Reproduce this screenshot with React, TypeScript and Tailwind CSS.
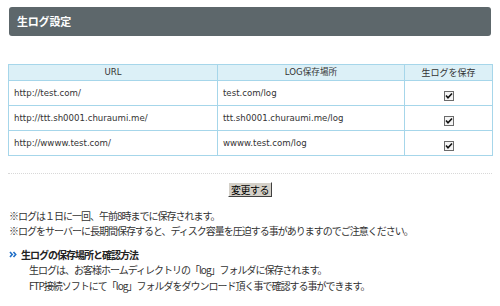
const rows = [
  { url: "http://test.com/", log: "test.com/log" },
  { url: "http://ttt.sh0001.churaumi.me/", log: "ttt.sh0001.churaumi.me/log" },
  { url: "http://wwww.test.com/", log: "wwww.test.com/log" },
];

const jp = "font-['Noto_Sans_CJK_JP',sans-serif]";
const latin = "font-['DejaVu_Sans','Noto_Sans_CJK_JP',sans-serif]";

function CheckMark() {
  return (
    <span className="inline-flex w-[10px] h-[10px] items-center justify-center border border-[#6b6b6b] bg-[#f4f4f4] align-middle">
      <svg width="8" height="8" viewBox="0 0 8 8">
        <path d="M1 3.5 L3 5.8 L7 1.5" stroke="#111" strokeWidth="1.6" fill="none" />
      </svg>
    </span>
  );
}

function Chevrons() {
  return (
    <svg width="8" height="7" viewBox="0 0 8 7" className="shrink-0">
      <path d="M1 1 L3.2 3.5 L1 6 M4.5 1 L6.7 3.5 L4.5 6" stroke="#1f6fc8" strokeWidth="1.6" fill="none" />
    </svg>
  );
}

export default function App() {
  return (
    <div className={`w-[500px] h-[306px] bg-white px-2 text-[#333] ${jp} overflow-hidden`}>
      <div className="mt-[7px] mx-[1px] h-[29px] rounded-[3px] bg-[#5d676b] flex items-center px-2">
        <span className="text-white text-[11px] font-bold tracking-[-0.2px]">生ログ設定</span>
      </div>

      <table className="mt-[28px] w-[484px] border-collapse table-fixed">
        <colgroup>
          <col className="w-[209px]" />
          <col className="w-[187px]" />
          <col className="w-[88px]" />
        </colgroup>
        <thead>
          <tr className="h-[16px] bg-[#dcf0f7]">
            <th className={`border border-[#a6d6ea] font-normal text-[8.6px] ${latin}`}>URL</th>
            <th className={`border border-[#a6d6ea] font-normal text-[8.6px] ${latin}`}>LOG保存場所</th>
            <th className="border border-[#a6d6ea] font-normal text-[9px]">生ログを保存</th>
          </tr>
        </thead>
        <tbody>
          {rows.map((r) => (
            <tr key={r.url} className="h-[25px]">
              <td className={`border border-[#a6d6ea] pl-[5px] text-[8.6px] ${latin}`}>{r.url}</td>
              <td className={`border border-[#a6d6ea] pl-[5px] text-[8.6px] ${latin}`}>{r.log}</td>
              <td className="border border-[#a6d6ea] text-center">
                <CheckMark />
              </td>
            </tr>
          ))}
        </tbody>
      </table>

      <div className="mt-[17px] border-t border-dotted border-[#d8d8d8]" />

      <div className="mt-[8px] flex justify-center">
        <button
          type="button"
          className="h-[15px] w-[44px] bg-[#d4d0c8] border border-t-[#fff] border-l-[#fff] border-b-[#404040] border-r-[#404040] text-[10px] leading-none text-black tracking-[-0.5px]"
        >
          変更する
        </button>
      </div>

      <div className="mt-[11px] pl-[1px] text-[10px] leading-[15px] tracking-[-1px]">
        <p>※ログは１日に一回、午前8時までに保存されます。</p>
        <p>※ログをサーバーに長期間保存すると、ディスク容量を圧迫する事がありますのでご注意ください。</p>
      </div>

      <div className="mt-[9px] pl-[1px] flex items-center gap-[4px] h-[15px]">
        <Chevrons />
        <span className="text-[10px] font-bold tracking-[-1px] text-[#222]">生ログの保存場所と確認方法</span>
      </div>
      <div className="pl-[21px] text-[10px] leading-[15.5px] tracking-[-1px]">
        <p>生ログは、お客様ホームディレクトリの「log」フォルダに保存されます。</p>
        <p>FTP接続ソフトにて「log」フォルダをダウンロード頂く事で確認する事ができます。</p>
      </div>
    </div>
  );
}
